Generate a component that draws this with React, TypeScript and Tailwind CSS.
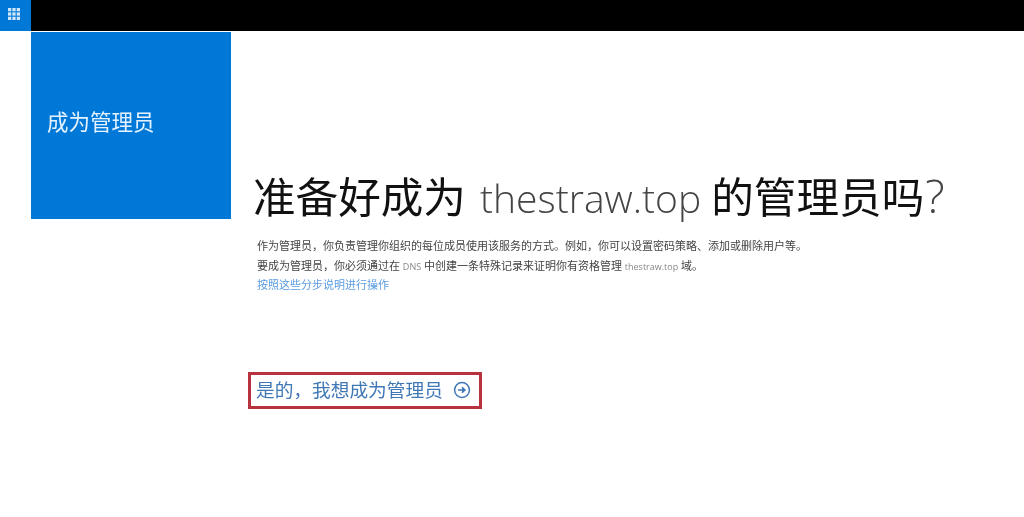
const cjk = 'font-["Open_Sans","Noto_Sans_CJK_SC",sans-serif]';

function WaffleIcon() {
  return (
    <svg width="12" height="12" viewBox="0 0 11 11" fill="#cfe6fb" aria-hidden="true">
      {[0, 4, 8].map((y) =>
        [0, 4, 8].map((x) => <rect key={`${x}-${y}`} x={x} y={y} width="3" height="3" />),
      )}
    </svg>
  );
}

function ArrowCircle() {
  return (
    <svg width="18" height="18" viewBox="0 0 18 18" fill="none" stroke="#3f78b5" strokeWidth="1.5" aria-hidden="true">
      <circle cx="9" cy="9" r="7.4" />
      <path d="M5 9h6M9 6.2 12 9l-3 2.8" fill="#3f78b5" />
    </svg>
  );
}

export default function App() {
  return (
    <div className={`h-[517px] w-[1024px] overflow-hidden bg-white ${cjk} blur-[0.6px]`}>
      <header className="flex h-[31px] bg-black">
        <div className="flex w-[31px] items-center justify-center bg-[#0078d7] pb-[3px] pr-[3px]">
          <WaffleIcon />
        </div>
      </header>

      <div className="flex pl-[31px] pt-px">
        <aside className="flex h-[187px] w-[200px] shrink-0 items-center bg-[#0078d7] pb-[8px] pl-[16px]">
          <h2 className="text-[21.5px] leading-none text-[#e4f3ff]">成为管理员</h2>
        </aside>

        <main className="ml-[22px] pt-[131px]">
          <h1 className="whitespace-nowrap text-[42.6px] leading-[64px] text-[#111]">
            准备好成为 <span className="ml-[3px] mr-[-1px] text-[39px] font-light text-[#444]">thestraw.top</span> 的管理员吗
            <span className="ml-[1px] text-[46px] font-light text-[#444]">?</span>
          </h1>

          <div className="ml-[4px] mt-[6px] text-[11px] leading-[19.5px] text-[#444]">
            <p>作为管理员，你负责管理你组织的每位成员使用该服务的方式。例如，你可以设置密码策略、添加或删除用户等。</p>
            <p>
              要成为管理员，你必须通过在 <span className="text-[9px] text-[#888]">DNS</span> 中创建一条特殊记录来证明你有资格管理{' '}
              <span className="text-[9px] text-[#888]">thestraw.top</span> 域。
            </p>
            <a className="-mt-px block text-[#5a9be0]" href="#">按照这些分步说明进行操作</a>
          </div>

          <a
            href="#"
            className="-ml-[5px] mt-[77px] flex h-[37px] w-[234px] items-center gap-[10px] border-[3px] border-[#b8323f] pl-[5px] text-[18.7px] text-[#3f78b5]"
          >
            是的，我想成为管理员
            <ArrowCircle />
          </a>
        </main>
      </div>
    </div>
  );
}
